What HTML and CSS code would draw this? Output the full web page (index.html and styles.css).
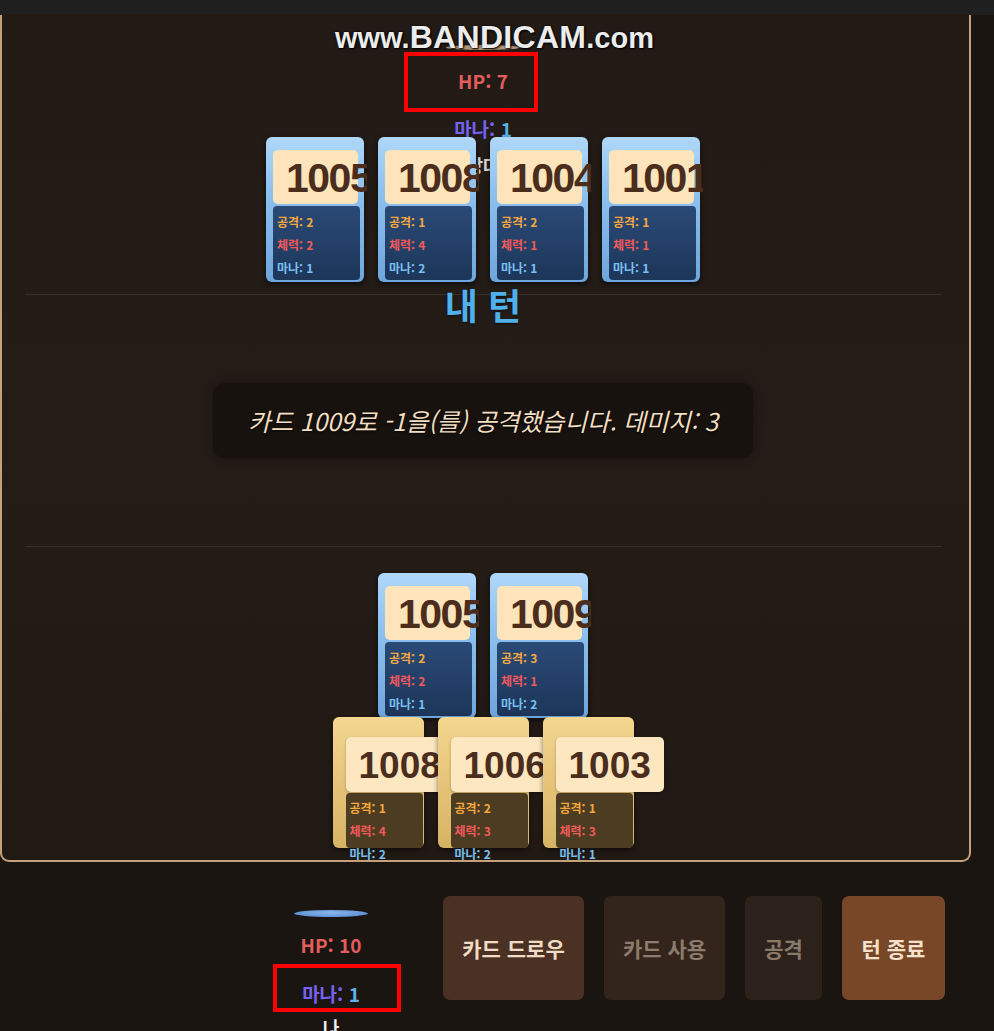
FILE: index.html
```html
<!DOCTYPE html>
<html lang="ko">
<head>
<meta charset="utf-8">
<title>카드 게임</title>
<link rel="stylesheet" href="styles.css">
</head>
<body>
<div class="topbar"></div>
<main class="board">
  <section class="opp">
    <div class="avatar avatar-opp"></div>
    <div class="hp">HP: 7</div>
    <div class="mana"><span class="mana-label">마나:</span> <span class="mana-val">1</span></div>
    <div class="who">상대</div>
  </section>
  <div class="row row-blue opp-cards">
    <div class="card card-blue"><div class="num">1005</div><div class="stats"><div class="atk">공격: 2</div><div class="hpv">체력: 2</div><div class="mn">마나: 1</div></div></div>
    <div class="card card-blue"><div class="num">1008</div><div class="stats"><div class="atk">공격: 1</div><div class="hpv">체력: 4</div><div class="mn">마나: 2</div></div></div>
    <div class="card card-blue"><div class="num">1004</div><div class="stats"><div class="atk">공격: 2</div><div class="hpv">체력: 1</div><div class="mn">마나: 1</div></div></div>
    <div class="card card-blue"><div class="num">1001</div><div class="stats"><div class="atk">공격: 1</div><div class="hpv">체력: 1</div><div class="mn">마나: 1</div></div></div>
  </div>
  <div class="divider"></div>
  <div class="turn">내 턴</div>
  <div class="log">카드 1009로 -1을(를) 공격했습니다. 데미지: 3</div>
  <div class="divider divider-2"></div>
  <div class="row row-blue field">
    <div class="card card-blue"><div class="num">1005</div><div class="stats"><div class="atk">공격: 2</div><div class="hpv">체력: 2</div><div class="mn">마나: 1</div></div></div>
    <div class="card card-blue"><div class="num">1009</div><div class="stats"><div class="atk">공격: 3</div><div class="hpv">체력: 1</div><div class="mn">마나: 2</div></div></div>
  </div>
  <div class="row hand">
    <div class="card card-gold"><div class="num">1008</div><div class="stats"><div class="atk">공격: 1</div><div class="hpv">체력: 4</div><div class="mn">마나: 2</div></div></div>
    <div class="card card-gold"><div class="num">1006</div><div class="stats"><div class="atk">공격: 2</div><div class="hpv">체력: 3</div><div class="mn">마나: 2</div></div></div>
    <div class="card card-gold"><div class="num">1003</div><div class="stats"><div class="atk">공격: 1</div><div class="hpv">체력: 3</div><div class="mn">마나: 1</div></div></div>
  </div>
</main>
<footer class="controls">
  <div class="player">
    <div class="avatar avatar-me"></div>
    <div class="hp">HP: 10</div>
    <div class="mana"><span class="mana-label">마나:</span> <span class="mana-val">1</span></div>
    <div class="who">나</div>
  </div>
  <div class="buttons">
    <button class="btn btn-draw">카드 드로우</button>
    <button class="btn btn-use">카드 사용</button>
    <button class="btn btn-attack">공격</button>
    <button class="btn btn-end">턴 종료</button>
  </div>
</footer>
<div class="watermark">www.<span class="wm-big">BANDICAM</span>.com</div>
<div class="mark mark-top"></div>
<div class="mark mark-bottom"></div>
</body>
</html>
```
FILE: styles.css
```css
html, body {
  margin: 0;
  padding: 0;
}
body {
  width: 994px;
  height: 1031px;
  overflow: hidden;
  background: #1a1511;
  font-family: "Noto Sans CJK KR", "Noto Sans", sans-serif;
  position: relative;
}
.topbar {
  height: 15px;
  background: #1f1f1f;
}
.board {
  width: 971px;
  height: 847px;
  box-sizing: border-box;
  border: 2px solid #c6a07a;
  border-top: 0;
  border-radius: 0 0 9px 9px;
  background: linear-gradient(180deg, #211a15 0%, #241c17 50%, #201914 100%);
  padding-right: 5px;
  display: flex;
  flex-direction: column;
  align-items: center;
  overflow: hidden;
}
.opp {
  display: flex;
  flex-direction: column;
  align-items: center;
  margin-top: 30px;
}
.avatar {
  border-radius: 50%;
}
.avatar-opp {
  width: 74px;
  height: 5px;
  background: #b39672;
}
.hp {
  font-weight: 700;
  font-size: 19px;
  line-height: 20px;
  color: #e35d5d;
}
.opp .hp {
  margin-top: 21px;
}
.mana {
  font-weight: 700;
  font-size: 19px;
  line-height: 20px;
  margin-top: 28px;
}
.mana-label {
  color: #7462f2;
}
.mana-val {
  color: #5cb2ea;
}
.who {
  margin-top: 16px;
  font-weight: 700;
  font-size: 18px;
  line-height: 20px;
  color: #d8d8d8;
}
.row {
  display: flex;
}
.row-blue {
  gap: 14px;
}
.opp-cards {
  margin-top: -38px;
}
.card {
  position: relative;
  box-sizing: border-box;
}
.card-blue {
  width: 98px;
  height: 145px;
  padding: 13px 4px 2px 7px;
  border-radius: 6px;
  background: linear-gradient(180deg, #afd7f9 0%, #8cc0ee 40%, #6ea5dd 100%);
  box-shadow: 0 2px 5px rgba(0, 0, 0, 0.6);
  overflow: clip;
  overflow-clip-margin: 3px;
}
.num {
  box-sizing: border-box;
  font-family: "Liberation Sans", Arial, sans-serif;
  font-weight: 700;
  color: #4a2d1c;
  white-space: nowrap;
}
.card-blue .num {
  width: 85px;
  height: 54px;
  line-height: 56px;
  padding-left: 13px;
  font-size: 41px;
  letter-spacing: -1.5px;
  background: #fde4ba;
  border-radius: 5px;
}
.stats {
  box-sizing: border-box;
  font-weight: 700;
  font-size: 12px;
  line-height: 23px;
  white-space: nowrap;
}
.card-blue .stats {
  margin-top: 2px;
  height: 74px;
  padding: 4px 0 0 4px;
  background: linear-gradient(180deg, #2a4a76 0%, #1d3659 100%);
  border-radius: 4px;
}
.atk { color: #f5a83e; }
.hpv { color: #f25a5a; }
.mn { color: #79c0f2; }
.divider {
  align-self: stretch;
  height: 1px;
  margin: 12px 22px 0 23px;
  background: #3a2f27;
}
.turn {
  margin-top: -10px;
  font-weight: 700;
  font-size: 36px;
  line-height: 38px;
  color: #4fb0ec;
  text-shadow: 0 1px 2px rgba(0, 0, 0, 0.6);
  position: relative;
}
.log {
  margin-top: 60px;
  width: 540px;
  height: 75px;
  border-radius: 12px;
  background: #17120e;
  box-shadow: 0 0 8px rgba(0, 0, 0, 0.35);
  display: flex;
  align-items: center;
  justify-content: center;
  font-style: italic;
  font-size: 24.5px;
  color: #f3dfc2;
  text-shadow: 0 1px 2px rgba(0, 0, 0, 0.8);
}
.divider-2 {
  margin-top: 88px;
}
.field {
  margin-top: 26px;
}
.hand {
  margin-top: -1px;
  gap: 14px;
}
.card-gold {
  width: 91px;
  height: 131px;
  padding: 20px 0 0 13px;
  border-radius: 6px;
  background: linear-gradient(180deg, #f3d68f 0%, #e6c479 50%, #d6b264 100%);
  box-shadow: 0 2px 5px rgba(0, 0, 0, 0.5);
}
.card-gold .num {
  width: 108px;
  height: 55px;
  line-height: 57px;
  padding-left: 13px;
  font-size: 37px;
  background: #fde7c1;
  border-radius: 5px;
  box-shadow: 0 1px 3px rgba(0, 0, 0, 0.25);
}
.card-gold .stats {
  margin-top: 1px;
  width: 77px;
  height: 55px;
  padding: 3px 0 0 4px;
  background: #4c3c22;
  border-radius: 4px;
}
.controls {
  display: flex;
  align-items: flex-start;
  margin-top: 34px;
  padding-left: 271px;
}
.player {
  width: 120px;
  display: flex;
  flex-direction: column;
  align-items: center;
  padding-top: 14px;
}
.avatar-me {
  width: 74px;
  height: 7px;
  background: radial-gradient(ellipse at 50% 40%, #8ab6ec 0%, #5f93d6 70%, #4a7cc0 100%);
}
.player .hp {
  margin-top: 17px;
  line-height: 22px;
}
.player .mana {
  margin-top: 27px;
  line-height: 22px;
}
.player .who {
  margin-top: 12px;
  color: #eeeeee;
}
.buttons {
  display: flex;
  gap: 20px;
  margin-left: 52px;
}
.btn {
  height: 104px;
  padding: 0;
  border: 0;
  border-radius: 7px;
  font-family: "Noto Sans CJK KR", "Noto Sans", sans-serif;
  font-weight: 700;
  font-size: 21px;
  text-align: center;
}
.btn-draw {
  width: 141px;
  background: #4b3124;
  color: #f0dcc4;
}
.btn-use {
  width: 121px;
  background: #33241c;
  color: #8c7c6c;
}
.btn-attack {
  width: 77px;
  background: #2d221b;
  color: #8a7a6a;
}
.btn-end {
  width: 103px;
  background: #774727;
  color: #f6e2cc;
}
.watermark {
  position: absolute;
  top: 20px;
  left: 335px;
  font-family: "Liberation Sans", Arial, sans-serif;
  font-weight: 700;
  font-size: 29px;
  line-height: 34px;
  color: #ececec;
  text-shadow: 0 0 2px #000, 1px 1px 2px #000;
  white-space: nowrap;
}
.wm-big {
  font-size: 32px;
  letter-spacing: 0.3px;
}
.mark {
  position: absolute;
  box-sizing: border-box;
  border: 4px solid #ff0000;
}
.mark-top {
  left: 404px;
  top: 52px;
  width: 134px;
  height: 60px;
}
.mark-bottom {
  left: 273px;
  top: 964px;
  width: 128px;
  height: 48px;
}
```
